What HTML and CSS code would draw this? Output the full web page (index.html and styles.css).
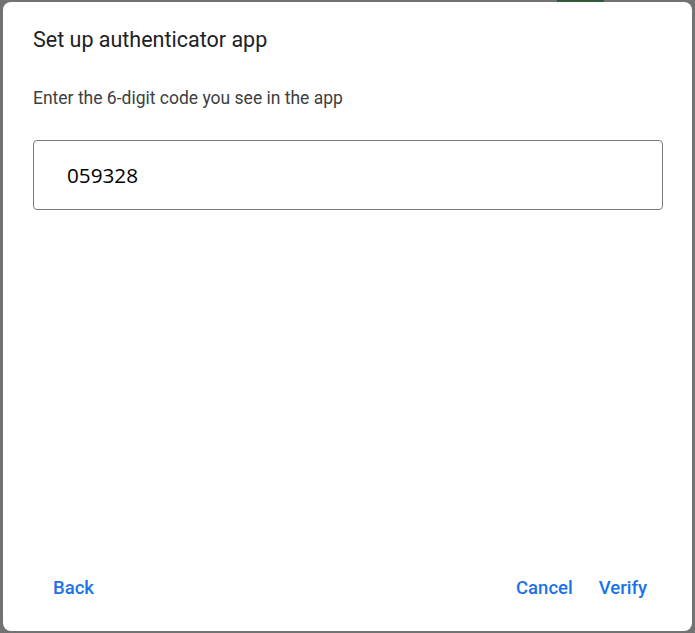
FILE: index.html
```html
<!DOCTYPE html>
<html>
<head>
<meta charset="utf-8">
<link rel="stylesheet" href="styles.css">
</head>
<body>
<div class="backdrop">
  <div class="peek-top"></div>
  <div class="dialog">
    <h1 class="title">Set up authenticator app</h1>
    <p class="subtitle">Enter the 6-digit code you see in the app</p>
    <div class="field"><span class="code">059328</span></div>
    <div class="spacer"></div>
    <div class="actions">
      <button class="btn">Back</button>
      <div class="right">
        <button class="btn">Cancel</button>
        <button class="btn">Verify</button>
      </div>
    </div>
  </div>
</div>
</body>
</html>
```
FILE: styles.css
```css
html, body {
  margin: 0;
  padding: 0;
  height: 100%;
}
body {
  background: #727272;
  font-family: Roboto, "Liberation Sans", sans-serif;
}
.backdrop {
  position: relative;
  height: 633px;
  padding: 2px 3px 2px 3px;
  box-sizing: border-box;
  display: flex;
}
.peek-top {
  position: absolute;
  left: 557px;
  top: 0;
  width: 47px;
  height: 2px;
  background: #2f5a3a;
}
.dialog {
  flex: 1;
  background: #fff;
  border-radius: 8px;
  display: flex;
  flex-direction: column;
  padding: 0 29px 0 30px;
}
.title {
  margin: 24px 0 0 0;
  font-size: 21.5px;
  font-weight: 400;
  line-height: 28px;
  color: #202124;
}
.subtitle {
  margin: 32px 0 0 0;
  font-size: 17.5px;
  line-height: 24px;
  color: #3c4043;
}
.field {
  margin-top: 30px;
  height: 70px;
  border: 1px solid #7a7a7a;
  border-radius: 4px;
  box-sizing: border-box;
  display: flex;
  align-items: center;
  padding-left: 33px;
}
.code {
  font-family: "Open Sans", sans-serif;
  font-size: 20.7px;
  color: #000;
  margin-top: -1px;
}
.spacer {
  flex: 1;
}
.actions {
  display: flex;
  justify-content: space-between;
  align-items: center;
  margin-bottom: 31px;
  padding: 0 16px 0 20px;
}
.right {
  display: flex;
  gap: 26px;
}
.btn {
  border: 0;
  background: none;
  padding: 0;
  font-family: Roboto, "Liberation Sans", sans-serif;
  font-size: 18.5px;
  font-weight: 500;
  color: #1a73e8;
  line-height: 24px;
}
```
